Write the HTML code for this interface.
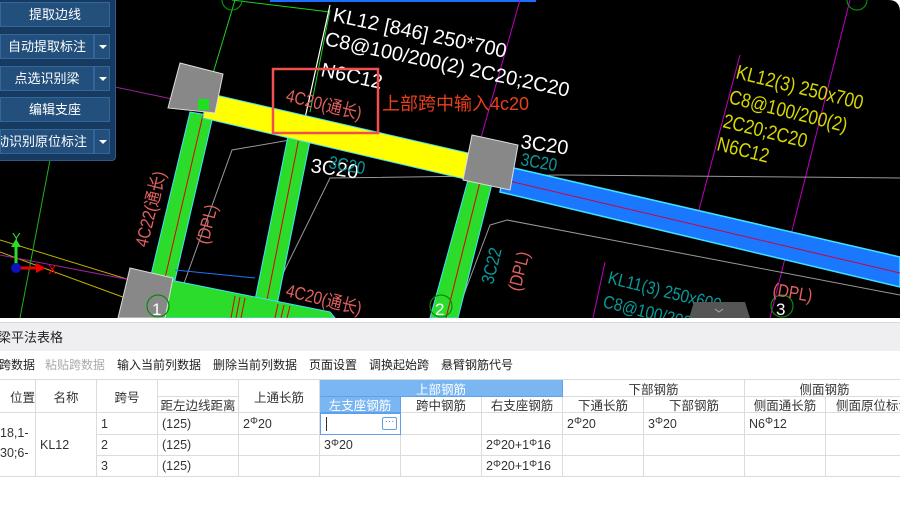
<!DOCTYPE html>
<html><head><meta charset="utf-8"><style>
*{margin:0;padding:0;box-sizing:border-box}
body{width:900px;height:507px;overflow:hidden;background:#fff;font-family:"Liberation Sans","Noto Sans CJK SC",sans-serif;position:relative}
#cad{position:absolute;left:0;top:0;width:900px;height:318px;background:#000;overflow:hidden}
.panel{position:absolute;left:0;top:0;width:116px;height:161px;background:#173a60;border-right:1px solid #2d5a88;border-bottom:1px solid #2d5a88;border-radius:0 0 4px 0}
.btn{position:absolute;left:0;height:25px;background:#234f7c;border:1px solid #33669a;color:#fff;font-size:13px;line-height:23px;text-align:center;white-space:nowrap;overflow:hidden}
.dd{position:absolute;left:94px;width:16px;height:25px;background:#234f7c;border:1px solid #33669a}
.dd:after{content:"";position:absolute;left:4px;top:10px;border-left:4px solid transparent;border-right:4px solid transparent;border-top:4px solid #fff}
.tb{position:absolute;top:322px;left:0;width:900px;height:29px;background:#efeff1;border-top:1px solid #d8d8dc;font-size:13px;color:#222;line-height:29px}
.tool{position:absolute;top:351px;left:0;width:900px;height:28px;font-size:12px;color:#222;line-height:28px;white-space:nowrap}
.tool span{position:absolute;top:0}
.c{position:absolute;font-size:12.5px;color:#333;white-space:nowrap;border-right:1px solid #dcdcdc;border-bottom:1px solid #dcdcdc;display:flex;align-items:center;overflow:hidden}
.cc{justify-content:center}
.pl{padding-left:4px}
.blue{background:#7ab6f2;color:#fff}
.s{font-size:10px;position:relative;top:-2px}
</style></head><body>
<div id="cad">
<svg width="900" height="318" style="position:absolute;left:0;top:0">
<rect x="270" y="0" width="266" height="2" fill="#1a6fff"/>
<line x1="0" y1="240" x2="260" y2="320" stroke="#c0b000" stroke-width="1"/>
<line x1="0" y1="252" x2="180" y2="318" stroke="#c0b000" stroke-width="1"/>
<line x1="115" y1="87" x2="215" y2="108" stroke="#a0209a" stroke-width="1"/>
<line x1="0" y1="255" x2="330" y2="318" stroke="#a0209a" stroke-width="1"/>
<line x1="235" y1="0" x2="205" y2="100" stroke="#1fd01f" stroke-width="1"/>
<line x1="50" y1="160" x2="20" y2="318" stroke="#1fb01f" stroke-width="1"/>
<line x1="232" y1="0" x2="330" y2="12" stroke="#1fd01f" stroke-width="1"/>
<line x1="330" y1="5" x2="305" y2="118" stroke="#fff" stroke-width="1.2"/>
<line x1="330" y1="10" x2="310" y2="112" stroke="#1fd01f" stroke-width="1"/>
<line x1="520" y1="0" x2="430" y2="318" stroke="#c000c0" stroke-width="1"/>
<line x1="850" y1="0" x2="770" y2="318" stroke="#c000c0" stroke-width="1"/>
<line x1="740" y1="55" x2="695" y2="225" stroke="#c000c0" stroke-width="1"/>
<line x1="605" y1="262" x2="593" y2="318" stroke="#c000c0" stroke-width="1"/>
<polyline points="290,140 232,150 178,300" fill="none" stroke="#999" stroke-width="1"/>
<polyline points="900,178 560,175 330,178 265,310" fill="none" stroke="#999" stroke-width="1"/>
<polyline points="900,295 507,220 490,225 455,318" fill="none" stroke="#999" stroke-width="1"/>
<polygon points="505,166 900,257 900,287 500,192" fill="#1a78ff" stroke="#40e0ff" stroke-width="1.5"/>
<line x1="505" y1="180" x2="900" y2="273" stroke="#d00040" stroke-width="1"/>
<polygon points="190,112 213,116 175,280 151,275" fill="#2bdc2b" stroke="#40e0ff" stroke-width="1"/>
<line x1="203" y1="115" x2="165" y2="278" stroke="#e00000" stroke-width="1"/>
<polygon points="288,136 310,141 276,310 254,305" fill="#2bdc2b" stroke="#40e0ff" stroke-width="1"/>
<line x1="299" y1="138" x2="266" y2="305" stroke="#e00000" stroke-width="1"/>
<polygon points="468,180 492,184 458,318 430,318" fill="#2bdc2b" stroke="#40e0ff" stroke-width="1"/>
<line x1="480" y1="182" x2="446" y2="318" stroke="#e00000" stroke-width="1"/>
<polygon points="170,280 330,312 335,318 160,318 163,305" fill="#2bdc2b" stroke="#40e0ff" stroke-width="1"/>
<line x1="175" y1="270" x2="255" y2="278" stroke="#1a78ff" stroke-width="1"/>
<g stroke="#e00000" stroke-width="1"><line x1="235" y1="296" x2="231" y2="318"/><line x1="240" y1="297" x2="236" y2="318"/><line x1="245" y1="298" x2="241" y2="318"/><line x1="278" y1="304" x2="275" y2="318"/><line x1="284" y1="305" x2="281" y2="318"/><line x1="290" y1="306" x2="287" y2="318"/></g>
<polygon points="207,93 490,158 486,184 203,118" fill="#ffff00" stroke="#40e0ff" stroke-width="1"/>
<polygon points="180,63 223,74 215,113 168,108" fill="#888" stroke="#ddd" stroke-width="1"/>
<rect x="198" y="99" width="11" height="11" fill="#1fe01f"/>
<polygon points="472,135 518,145 510,190 463,180" fill="#888" stroke="#ddd" stroke-width="1"/>
<polygon points="130,268 173,278 165,318 118,318" fill="#888" stroke="#ddd" stroke-width="1"/>
<g fill="none" stroke="#0a8a0a" stroke-width="1.2"><circle cx="158" cy="306" r="11"/><circle cx="441" cy="306" r="11"/><circle cx="782" cy="306" r="11"/><circle cx="232" cy="0" r="10"/><circle cx="857" cy="0" r="10"/></g>
<g fill="#fff" font-size="17" font-family="Liberation Sans,sans-serif"><text x="152" y="315">1</text><text x="435" y="315">2</text><text x="776" y="315">3</text></g>
<line x1="16" y1="267" x2="16" y2="245" stroke="#2bdc2b" stroke-width="3"/>
<polygon points="11,247 21,247 16,239" fill="#2bdc2b"/>
<line x1="16" y1="268" x2="38" y2="268" stroke="#e00" stroke-width="3"/>
<polygon points="36,263 46,268 36,273" fill="#e00"/>
<circle cx="16" cy="268" r="5" fill="#1010c0"/>
<text x="12" y="242" fill="#2bdc2b" font-size="13">Y</text>
<text x="48" y="274" fill="#e00" font-size="13">X</text>
<g font-family="Liberation Sans,sans-serif" fill="#fff" font-size="20">
<text transform="translate(332,21) rotate(12)">KL12 [846] 250*700</text>
<text transform="translate(324,45) rotate(12)">C8@100/200(2) 2C20;2C20</text>
<text transform="translate(320,76) rotate(12)">N6C12</text>
<text transform="translate(310,172) rotate(8)">3C20</text>
<text transform="translate(520,148) rotate(8)">3C20</text>
</g>
<g font-family="Liberation Sans Narrow,Liberation Sans,sans-serif" font-size="20" fill="#d8d800">
<text transform="translate(735,78) rotate(14) scale(0.85,1)">KL12(3) 250x700</text>
<text transform="translate(728,103) rotate(14) scale(0.85,1)">C8@100/200(2)</text>
<text transform="translate(722,127) rotate(14) scale(0.85,1)">2C20;2C20</text>
<text transform="translate(716,150) rotate(14) scale(0.85,1)">N6C12</text>
</g>
<g font-family="Liberation Sans Narrow,Liberation Sans,'Noto Sans CJK SC',sans-serif" font-size="18" fill="#e26060">
<text transform="translate(285,101) rotate(14) scale(0.85,1)">4C20(通长)</text>
<text transform="translate(285,296) rotate(14) scale(0.85,1)">4C20(通长)</text>
<text transform="translate(147,248) rotate(-76) scale(0.85,1)">4C22(通长)</text>
<text transform="translate(208,245) rotate(-76) scale(0.85,1)">(DPL)</text>
<text transform="translate(520,292) rotate(-76) scale(0.85,1)">(DPL)</text>
<text transform="translate(772,295) rotate(10) scale(0.85,1)">(DPL)</text>
</g>
<g font-family="Liberation Sans Narrow,Liberation Sans,sans-serif" font-size="18" fill="#0a9a9a">
<text transform="translate(328,168) rotate(10) scale(0.85,1)">3C20</text>
<text transform="translate(520,165) rotate(10) scale(0.85,1)">3C20</text>
<text transform="translate(493,285) rotate(-76) scale(0.85,1)">3C22</text>
<text transform="translate(607,283) rotate(14) scale(0.85,1)">KL11(3) 250x600</text>
<text transform="translate(602,307) rotate(14) scale(0.85,1)">C8@100/200</text>
</g>
<rect x="273" y="69" width="105" height="64" fill="none" stroke="#f05050" stroke-width="2.5"/>
<text x="382" y="110" fill="#e8401c" font-size="18" font-family="Liberation Sans,'Noto Sans CJK SC',sans-serif">上部跨中输入4c20</text>
<polygon points="694,302 745,302 750,318 689,318" fill="#555"/>
<polyline points="715,309 719,312 723,309" fill="none" stroke="#aaa" stroke-width="1"/>
<path d="M888,0 Q900,0 900,12 L900,0Z" fill="#fff"/>
</svg>
<div class="panel">
<div class="btn" style="top:2px;width:110px">提取边线</div>
<div class="btn" style="top:34px;width:94px">自动提取标注</div><div class="dd" style="top:34px"></div>
<div class="btn" style="top:66px;width:94px">点选识别梁</div><div class="dd" style="top:66px"></div>
<div class="btn" style="top:97px;width:110px">编辑支座</div>
<div class="btn" style="top:129px;width:94px;text-align:left;text-indent:-5px">动识别原位标注</div><div class="dd" style="top:129px"></div>
</div>
</div>
<div class="tb" style="text-indent:-2px">梁平法表格</div>
<div class="tool"><span style="left:-1px">跨数据</span><span style="left:45px;color:#aaa">粘贴跨数据</span><span style="left:117px">输入当前列数据</span><span style="left:213px">删除当前列数据</span><span style="left:309px">页面设置</span><span style="left:369px">调换起始跨</span><span style="left:441px">悬臂钢筋代号</span></div>
<div style="position:absolute;left:0;top:379px;width:900px;border-top:1px solid #dcdcdc"></div>
<div class="c cc" style="left:0;top:380px;width:36px;height:33px;justify-content:flex-end">位置</div>
<div class="c cc" style="left:36px;top:380px;width:61px;height:33px">名称</div>
<div class="c cc" style="left:97px;top:380px;width:61px;height:33px">跨号</div>
<div class="c" style="left:158px;top:380px;width:81px;height:17px"></div>
<div class="c cc" style="left:158px;top:397px;width:81px;height:16px">距左边线距离</div>
<div class="c cc" style="left:239px;top:380px;width:81px;height:33px">上通长筋</div>
<div class="c cc blue" style="left:320px;top:380px;width:243px;height:17px;border-color:#5fa0e8">上部钢筋</div>
<div class="c cc blue" style="left:320px;top:397px;width:81px;height:16px;border-color:#5fa0e8">左支座钢筋</div>
<div class="c cc" style="left:401px;top:397px;width:81px;height:16px">跨中钢筋</div>
<div class="c cc" style="left:482px;top:397px;width:81px;height:16px">右支座钢筋</div>
<div class="c cc" style="left:563px;top:380px;width:182px;height:17px">下部钢筋</div>
<div class="c cc" style="left:563px;top:397px;width:81px;height:16px">下通长筋</div>
<div class="c cc" style="left:644px;top:397px;width:101px;height:16px">下部钢筋</div>
<div class="c cc" style="left:745px;top:380px;width:160px;height:17px">侧面钢筋</div>
<div class="c cc" style="left:745px;top:397px;width:81px;height:16px">侧面通长筋</div>
<div class="c" style="left:826px;top:397px;width:80px;height:16px;padding-left:10px">侧面原位标注</div>
<div class="c" style="left:0;top:413px;width:36px;height:64px;line-height:20px;display:block;padding-top:10px">18,1-<br>30;6-</div>
<div class="c pl" style="left:36px;top:413px;width:61px;height:64px">KL12</div>
<div class="c pl" style="left:97px;top:413px;width:61px;height:22px">1</div>
<div class="c pl" style="left:97px;top:435px;width:61px;height:21px">2</div>
<div class="c pl" style="left:97px;top:456px;width:61px;height:21px">3</div>
<div class="c pl" style="left:158px;top:413px;width:81px;height:22px">(125)</div>
<div class="c pl" style="left:158px;top:435px;width:81px;height:21px">(125)</div>
<div class="c pl" style="left:158px;top:456px;width:81px;height:21px">(125)</div>
<div class="c pl" style="left:239px;top:413px;width:81px;height:22px">2<span class="s">Φ</span>20</div>
<div class="c" style="left:239px;top:435px;width:81px;height:21px"></div>
<div class="c" style="left:239px;top:456px;width:81px;height:21px"></div>
<div class="c" style="left:320px;top:413px;width:81px;height:22px;border:1px solid #5fa0e8"><div style="position:absolute;left:5px;top:3px;width:1px;height:14px;background:#333"></div><div style="position:absolute;left:61px;top:3px;width:15px;height:13px;border:1px solid #5fa0e8;border-radius:2px;color:#3a80d0;font-size:10px;line-height:8px;text-align:center">···</div></div>
<div class="c pl" style="left:320px;top:435px;width:81px;height:21px">3<span class="s">Φ</span>20</div>
<div class="c" style="left:320px;top:456px;width:81px;height:21px"></div>
<div class="c" style="left:401px;top:413px;width:81px;height:22px"></div>
<div class="c" style="left:401px;top:435px;width:81px;height:21px"></div>
<div class="c" style="left:401px;top:456px;width:81px;height:21px"></div>
<div class="c" style="left:482px;top:413px;width:81px;height:22px"></div>
<div class="c pl" style="left:482px;top:435px;width:81px;height:21px">2<span class="s">Φ</span>20+1<span class="s">Φ</span>16</div>
<div class="c pl" style="left:482px;top:456px;width:81px;height:21px">2<span class="s">Φ</span>20+1<span class="s">Φ</span>16</div>
<div class="c pl" style="left:563px;top:413px;width:81px;height:22px">2<span class="s">Φ</span>20</div>
<div class="c" style="left:563px;top:435px;width:81px;height:21px"></div>
<div class="c" style="left:563px;top:456px;width:81px;height:21px"></div>
<div class="c pl" style="left:644px;top:413px;width:101px;height:22px">3<span class="s">Φ</span>20</div>
<div class="c" style="left:644px;top:435px;width:101px;height:21px"></div>
<div class="c" style="left:644px;top:456px;width:101px;height:21px"></div>
<div class="c pl" style="left:745px;top:413px;width:81px;height:22px">N6<span class="s">Φ</span>12</div>
<div class="c" style="left:745px;top:435px;width:81px;height:21px"></div>
<div class="c" style="left:745px;top:456px;width:81px;height:21px"></div>
<div class="c" style="left:826px;top:413px;width:80px;height:22px"></div>
<div class="c" style="left:826px;top:435px;width:80px;height:21px"></div>
<div class="c" style="left:826px;top:456px;width:80px;height:21px"></div>
</body></html>
